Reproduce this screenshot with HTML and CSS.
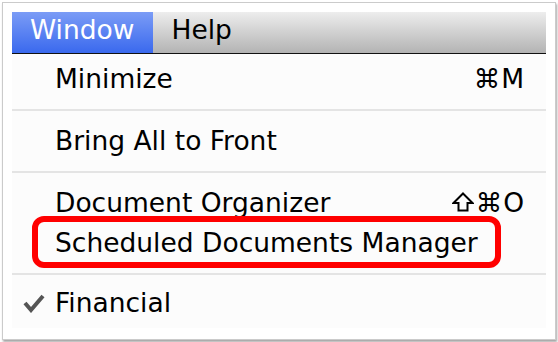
FILE: index.html
```html
<!DOCTYPE html>
<html lang="en">
<head>
<meta charset="UTF-8">
<meta name="viewport" content="width=device-width, initial-scale=1.0">
<title>Window menu</title>
<link rel="stylesheet" href="styles.css">
</head>
<body>

<div class="shot">
    <div class="menubar">
        <span class="menubar-item active">Window</span>
        <span class="menubar-item">Help</span>
    </div>

    <ul class="menu">
        <li class="menu-item">
            <span class="label">Minimize</span>
            <span class="shortcut">⌘M</span>
        </li>
        <li class="separator"></li>
        <li class="menu-item">
            <span class="label">Bring All to Front</span>
        </li>
        <li class="separator"></li>
        <li class="menu-item">
            <span class="label">Document Organizer</span>
            <!-- shift key glyph, hollow arrow -->
            <svg class="shift" width="22" height="20" viewBox="0 0 22 20">
                <path d="M11 1.5 L20.5 11 L15.5 11 L15.5 18.5 L6.5 18.5 L6.5 11 L1.5 11 Z" fill="none" stroke="#000" stroke-width="2" stroke-linejoin="miter"/>
            </svg>
            <span class="shortcut">⌘O</span>
        </li>
        <li class="menu-item highlighted">
            <span class="label">Scheduled Documents Manager</span>
            <span class="callout"></span>
        </li>
        <li class="separator last"></li>
        <li class="menu-item">
            <svg class="check" width="22" height="20" viewBox="0 0 22 20">
                <polyline points="2,10 8,17 20,3" fill="none" stroke="#555" stroke-width="4"/>
            </svg>
            <span class="label">Financial</span>
        </li>
    </ul>
</div>

</body>
</html>
```

FILE: styles.css
```css
body {
    margin: 0;
    padding: 0;
    background-color: #fff;
    font-family: "DejaVu Sans", Verdana, sans-serif;
    width: 558px;
    height: 342px;
    overflow: hidden;
}

/* white frame round the screenshot */
.shot {
    margin: 2px 0 0 2px;
    width: 534px;
    height: 318px;
    padding: 9px;
    border: 1px solid #cbcbcb;
    box-shadow: 1px 2px 2px rgba(0, 0, 0, 0.35);
    background-color: #fff;
}

.menubar {
    display: flex;
    height: 41px;
    border-bottom: 1px solid #111;
    background: linear-gradient(#ededed, #b3b3b3);
    font-size: 26.5px;
    line-height: 36px;
}

.menubar-item {
    padding: 0 19px;
    color: #000;
}

.menubar-item.active {
    padding: 0 18px;
    color: #fff;
    background: linear-gradient(#7b9cf6, #3a69ee);
}

.menu {
    list-style-type: none;
    margin: 0;
    padding: 5px 0 5px 0;
    background-color: #fcfcfc;
    font-size: 26.5px;
}

.menu-item {
    position: relative;
    display: flex;
    align-items: center;
    height: 40px;
    line-height: 40px;
    padding: 0 21px 0 43px;
    color: #000;
}

.label {
    flex: 1;
}

.shortcut {
    letter-spacing: 1px;
}

.shift {
    margin: 0 2px 3px 0;
}

.separator {
    height: 2px;
    margin: 10px 0;
    background-color: #e4e4e4;
}

.separator.last {
    margin-bottom: 8px;
}

.check {
    position: absolute;
    left: 11px;
    top: 10px;
}

/* red annotation box round one item */
.callout {
    position: absolute;
    left: 20px;
    top: -7px;
    width: 469px;
    height: 52px;
    box-sizing: border-box;
    border: 6px solid #f00;
    border-radius: 12px;
}
```
